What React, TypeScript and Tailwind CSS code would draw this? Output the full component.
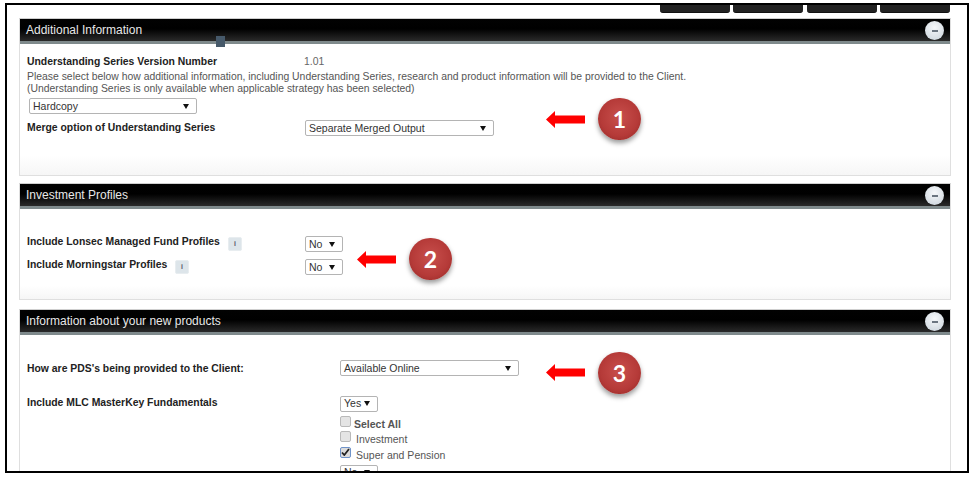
import React from "react";

function Select({ w, text, className = "" }: { w: string; text: string; className?: string }) {
  return (
    <div className={`${w} ${className} h-[16px] shrink-0 flex items-center justify-between bg-white border border-[#b4b4b4] rounded-[2px] pl-[3px] pr-[7px] text-[10.5px] leading-none text-[#333]`}>
      <span>{text}</span>
      <svg width="6" height="5" viewBox="0 0 6 5"><path d="M0 0H6L3 5Z" fill="#111" /></svg>
    </div>
  );
}

function Panel({ title, bodyClass, children }: { title: string; bodyClass: string; children: React.ReactNode }) {
  return (
    <section className="border border-[#dfdfdf] border-t-[#cfcfcf] mr-[16px]">
      <header className="relative h-[22px] bg-[linear-gradient(#020202,#000_45%,#2a2a2a)] flex items-center pl-[6px] text-[12px] text-[#e8e8e8]">
        <h2 className="font-normal">{title}</h2>
        <span className="absolute right-[6px] top-[2px] w-[19px] h-[19px] rounded-full bg-[radial-gradient(circle_at_50%_35%,#f6f8fa,#c9d2da)] flex items-center justify-center">
          <span className="w-[6px] h-[2px] bg-[#6b7580]" />
        </span>
      </header>
      <div className="h-[3px] bg-[#7f8a8c]" />
      <div className={`${bodyClass} bg-[linear-gradient(#fff_85%,#f6f6f6)] pl-[7px] text-[10.4px] text-[#444]`}>{children}</div>
    </section>
  );
}

function Info() {
  return (
    <span className="w-[14px] h-[14px] shrink-0 mt-[1px] rounded-[2px] bg-[#dde5ea] border border-[#e8edf0] flex items-center justify-center text-[7px] font-bold text-[#556]">i</span>
  );
}

function Check({ checked }: { checked?: boolean }) {
  return (
    <span className={`w-[11px] h-[11px] shrink-0 rounded-[2px] border flex items-center justify-center ${checked ? "border-[#6f93c9] bg-[#dcdcdc]" : "border-[#b9b9b9] bg-[#e4e4e4]"}`}>
      {checked && (
        <svg width="9" height="8" viewBox="0 0 9 8"><path d="M1 4.5L3.3 7L8 1" fill="none" stroke="#222" strokeWidth="1.8" /></svg>
      )}
    </span>
  );
}

function Arrow({ className }: { className: string }) {
  return (
    <svg className={`absolute ${className}`} width="39" height="17" viewBox="0 0 39 17">
      <path d="M0 8.5L9 0V4.5H39V12.5H9V17Z" fill="#ff0000" />
    </svg>
  );
}

function Badge({ n, className }: { n: string; className: string }) {
  return (
    <div className={`absolute ${className} w-[43px] h-[42px] rounded-full bg-[radial-gradient(circle_at_50%_45%,#c84f4c,#b53a38_60%,#8c2523)] shadow-[0_3px_5px_rgba(0,0,0,0.4)] flex items-center justify-center text-[23px] font-bold text-white font-['Lato',sans-serif]`}>
      {n}
    </div>
  );
}

const btn = "w-[70px] h-[8px] bg-[#222] rounded-b-[3px] border-b border-[#111]";

export default function App() {
  return (
    <div className="w-[974px] h-[479px] bg-white pt-[3px] pl-[5px] font-['Liberation_Sans',Arial,sans-serif]">
      <div className="relative w-[964px] h-[470px] border-2 border-black overflow-hidden pl-[12px]">
        <div className="flex justify-end gap-[3.33px] pr-[17px] h-[8px] mb-[5px]">
          <div className={btn} />
          <div className={btn} />
          <div className={btn} />
          <div className={btn} />
        </div>

        <Panel title="Additional Information" bodyClass="h-[131px] pt-[11px]">
          <div className="flex h-[13px] items-center">
            <b className="w-[277px] text-[#222]">Understanding Series Version Number</b>
            <span className="text-[#666]">1.01</span>
          </div>
          <p className="mt-[3px] leading-[12px] text-[#555]">
            Please select below how additional information, including Understanding Series, research and product information will be provided to the Client.
            <br />
            (Understanding Series is only available when applicable strategy has been selected)
          </p>
          <Select w="w-[168px]" text="Hardcopy" className="mt-[3px] ml-[2px]" />
          <div className="flex items-center mt-[6px]">
            <b className="w-[278px] text-[#222]">Merge option of Understanding Series</b>
            <Select w="w-[189px]" text="Separate Merged Output" />
          </div>
        </Panel>

        <div className="h-[7px]" />

        <Panel title="Investment Profiles" bodyClass="h-[90px] pt-[27px]">
          <div className="flex items-start h-[16px]">
            <div className="w-[278px] flex items-start">
              <b className="text-[#222] w-[201px] mt-[-2px] whitespace-nowrap">Include Lonsec Managed Fund Profiles</b>
              <Info />
            </div>
            <Select w="w-[38px]" text="No" />
          </div>
          <div className="flex items-start h-[16px] mt-[7px]">
            <div className="w-[278px] flex items-start">
              <b className="text-[#222] w-[148px] mt-[-2px] whitespace-nowrap">Include Morningstar Profiles</b>
              <Info />
            </div>
            <Select w="w-[38px]" text="No" />
          </div>
        </Panel>

        <div className="h-[9px]" />

        <Panel title="Information about your new products" bodyClass="h-[200px] pt-[25px]">
          <div className="flex items-start">
            <b className="w-[313px] text-[#222] mt-[1px]">How are PDS's being provided to the Client:</b>
            <Select w="w-[179px]" text="Available Online" />
          </div>
          <div className="flex items-center mt-[19px]">
            <b className="w-[313px] text-[#222] mt-[-2px]">Include MLC MasterKey Fundamentals</b>
            <Select w="w-[38px]" text="Yes" />
          </div>
          <div className="ml-[313px] mt-[4px] flex flex-col gap-[4.5px] text-[10.5px] text-[#555]">
            <div className="flex items-start gap-[3px] h-[11px]">
              <Check />
              <b className="mt-[1px]">Select All</b>
            </div>
            <div className="flex items-start gap-[5px] h-[11px]">
              <Check />
              <span className="mt-[1px]">Investment</span>
            </div>
            <div className="flex items-start gap-[5px] h-[11px]">
              <Check checked />
              <span className="mt-[1px]">Super and Pension</span>
            </div>
          </div>
          <div className="flex items-start mt-[7px]">
            <b className="w-[313px] text-[#222] mt-[3px]">Include MLC MasterKey</b>
            <Select w="w-[38px]" text="No" />
          </div>
        </Panel>

        <div className="absolute left-[209px] top-[31px] w-[9px] h-[11px] bg-[#46596a]" />

        <Arrow className="left-[539px] top-[106px]" />
        <Badge n="1" className="left-[591px] top-[93px]" />
        <Arrow className="left-[350px] top-[246px]" />
        <Badge n="2" className="left-[402px] top-[233px]" />
        <Arrow className="left-[539px] top-[359px]" />
        <Badge n="3" className="left-[591px] top-[347px]" />
      </div>
    </div>
  );
}
